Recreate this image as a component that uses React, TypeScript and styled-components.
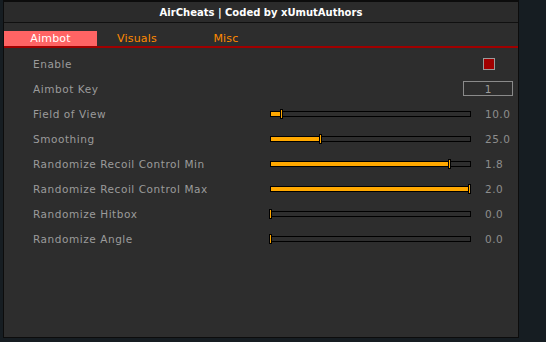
import React from 'react';
import styled, { createGlobalStyle } from 'styled-components';

const GlobalStyle = createGlobalStyle`
  html, body {
    margin: 0;
    padding: 0;
    background: #161d22;
    width: 546px;
    height: 342px;
    overflow: hidden;
  }
`;

const Window = styled.div`
  margin-left: 3px;
  width: 516px;
  height: 338px;
  background: #2d2d2d;
  border: 1px solid #0c0c0c;
  border-top-width: 2px;
  box-sizing: border-box;
  display: flex;
  flex-direction: column;
  font-family: 'DejaVu Sans', Verdana, sans-serif;
`;

const TitleBar = styled.div`
  height: 20px;
  background: #2b2b2b;
  border-bottom: 1px solid #101010;
  display: flex;
  align-items: center;
  justify-content: center;
  color: #ffffff;
  font-weight: bold;
  font-size: 10px;
`;

const TabBar = styled.div`
  margin-top: 8px;
  display: flex;
  border-bottom: 2px solid #a00000;
`;

const Tab = styled.div<{ $active?: boolean; $width: number }>`
  width: ${p => p.$width}px;
  height: 15px;
  display: flex;
  align-items: center;
  justify-content: center;
  font-size: 11px;
  letter-spacing: 0.2px;
  background: ${p => (p.$active ? '#ff6464' : 'transparent')};
  color: ${p => (p.$active ? '#ffffff' : '#ff8a00')};
`;

const Rows = styled.div`
  padding: 3px 0 0 29px;
  display: flex;
  flex-direction: column;
`;

const Row = styled.div`
  height: 25px;
  display: flex;
  align-items: center;
`;

const Label = styled.div`
  width: 237px;
  color: #9b9b9b;
  font-size: 10.5px;
  letter-spacing: 0.55px;
`;

const Checkbox = styled.div<{ $checked?: boolean }>`
  margin-left: 213px;
  width: 10px;
  height: 10px;
  border: 1px solid #9a9a9a;
  background: ${p => (p.$checked ? '#a00000' : 'transparent')};
`;

const KeyBox = styled.div`
  margin-left: 193px;
  width: 48px;
  height: 13px;
  border: 1px solid #8a8a8a;
  color: #9b9b9b;
  font-size: 10.5px;
  display: flex;
  align-items: center;
  justify-content: center;
`;

const Track = styled.div`
  position: relative;
  width: 199px;
  height: 4px;
  border: 1px solid #000;
  background: #2e2e2e;
`;

const Fill = styled.div`
  height: 100%;
  background: #ffa800;
`;

const Thumb = styled.div`
  position: absolute;
  top: -3px;
  width: 1px;
  height: 8px;
  background: #ffa800;
  border: 1px solid #000;
  margin-left: -2px;
`;

const Value = styled.div`
  margin-left: 14px;
  color: #8e8e8e;
  font-size: 10.5px;
  letter-spacing: 0.5px;
`;

type Slider = { label: string; value: number; max: number };

const sliders: Slider[] = [
  { label: 'Field of View', value: 10, max: 180 },
  { label: 'Smoothing', value: 25, max: 100 },
  { label: 'Randomize Recoil Control Min', value: 1.8, max: 2 },
  { label: 'Randomize Recoil Control Max', value: 2, max: 2 },
  { label: 'Randomize Hitbox', value: 0, max: 10 },
  { label: 'Randomize Angle', value: 0, max: 10 },
];

const SliderRow: React.FC<{ s: Slider }> = ({ s }) => {
  const pct = (s.value / s.max) * 100;
  return (
    <Row>
      <Label>{s.label}</Label>
      <Track>
        <Fill style={{ width: `${pct}%` }} />
        <Thumb style={{ left: `${pct}%` }} />
      </Track>
      <Value>{s.value.toFixed(1)}</Value>
    </Row>
  );
};

export default function App() {
  return (
    <>
      <GlobalStyle />
      <Window>
        <TitleBar>AirCheats | Coded by xUmutAuthors</TitleBar>
        <TabBar>
          <Tab $active $width={93}>Aimbot</Tab>
          <Tab $width={80}>Visuals</Tab>
          <Tab $width={98}>Misc</Tab>
        </TabBar>
        <Rows>
          <Row>
            <Label>Enable</Label>
            <Checkbox $checked />
          </Row>
          <Row>
            <Label>Aimbot Key</Label>
            <KeyBox>1</KeyBox>
          </Row>
          {sliders.map(s => (
            <SliderRow key={s.label} s={s} />
          ))}
        </Rows>
      </Window>
    </>
  );
}
